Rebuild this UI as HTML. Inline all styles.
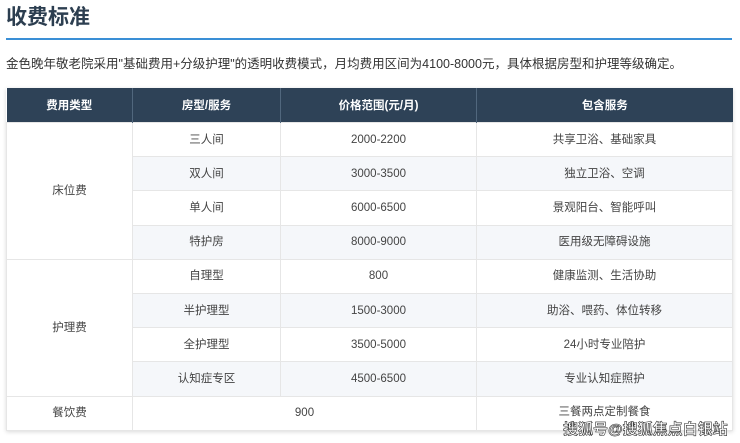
<!DOCTYPE html><html><head><meta charset="utf-8"><style>
body{margin:0;background:#fff;font-family:"Liberation Sans","Noto Sans CJK SC",sans-serif;color:#333;width:740px;height:443px;overflow:hidden;position:relative}
h1{position:absolute;left:6px;top:4px;margin:0;font-size:21px;font-weight:bold;color:#2c3e50;line-height:28px}
.line{position:absolute;left:6px;top:38px;width:726px;height:2px;background:#3a8fd6}
p{position:absolute;left:6px;top:55px;margin:0;font-size:12.5px;line-height:18px;color:#333;white-space:nowrap}
table{position:absolute;left:6px;top:88px;width:726px;border-collapse:collapse;font-size:11.5px;box-shadow:0 1px 4px rgba(0,0,0,.15);table-layout:fixed}
th{background:#2e4257;color:#fff;font-weight:bold;height:34px;padding:0;border-right:1px solid #51677d;font-size:11.5px}
td{text-align:center;height:33.2px;border:1px solid #e6e6e6;padding:0;color:#444;line-height:14px}
tr.s td{background:#f5f7fa}
td.w{background:#fff!important}
.wm{position:absolute;left:563px;top:418px;font-size:15px;font-weight:bold;color:#fff;-webkit-text-stroke:0.6px #333;white-space:nowrap}
</style></head><body>
<h1>收费标准</h1><div class="line"></div>
<p>金色晚年敬老院采用"基础费用+分级护理"的透明收费模式，月均费用区间为4100-8000元，具体根据房型和护理等级确定。</p>
<table>
<colgroup><col style="width:126px"><col style="width:148px"><col style="width:196px"><col style="width:256px"></colgroup>
<tr><th>费用类型</th><th>房型/服务</th><th>价格范围(元/月)</th><th style="border-right:0">包含服务</th></tr>
<tr><td rowspan="4" class="w">床位费</td><td>三人间</td><td>2000-2200</td><td>共享卫浴、基础家具</td></tr>
<tr class="s"><td>双人间</td><td>3000-3500</td><td>独立卫浴、空调</td></tr>
<tr><td>单人间</td><td>6000-6500</td><td>景观阳台、智能呼叫</td></tr>
<tr class="s"><td>特护房</td><td>8000-9000</td><td>医用级无障碍设施</td></tr>
<tr><td rowspan="4" class="w">护理费</td><td>自理型</td><td>800</td><td>健康监测、生活协助</td></tr>
<tr class="s"><td>半护理型</td><td>1500-3000</td><td>助浴、喂药、体位转移</td></tr>
<tr><td>全护理型</td><td>3500-5000</td><td>24小时专业陪护</td></tr>
<tr class="s"><td>认知症专区</td><td>4500-6500</td><td>专业认知症照护</td></tr>
<tr><td>餐饮费</td><td colspan="2">900</td><td style="vertical-align:top;padding-top:8px;height:25px">三餐两点定制餐食</td></tr>
</table>
<div class="wm">搜狐号@搜狐焦点白银站</div>
</body></html>
